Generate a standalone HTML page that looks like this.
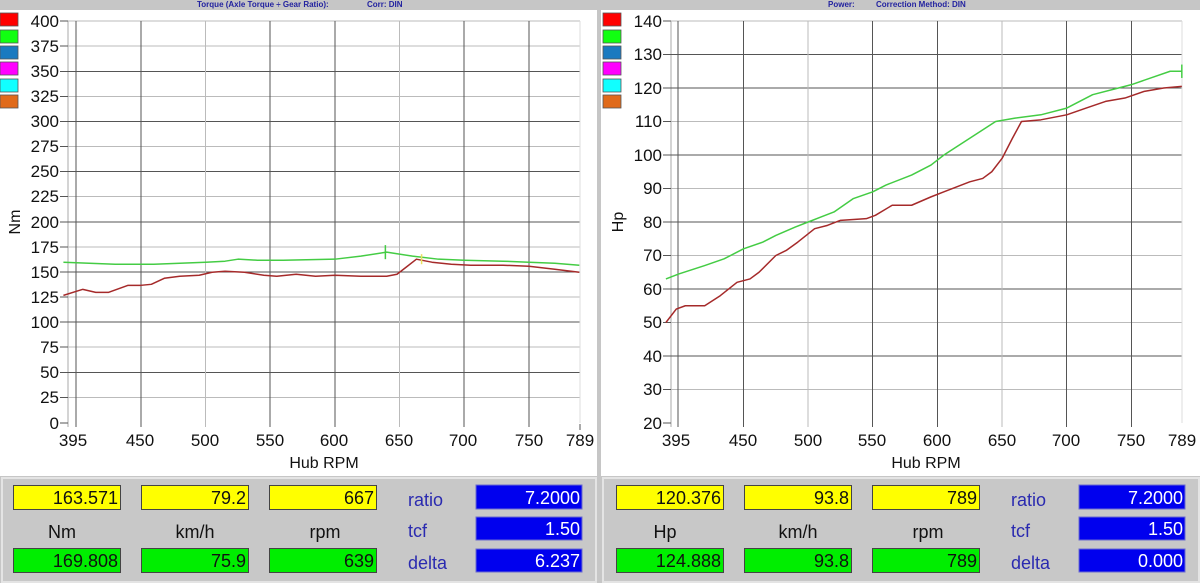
<!DOCTYPE html>
<html><head><meta charset="utf-8"><style>
html,body{margin:0;padding:0;background:#c8c8c8;}
svg{display:block;font-family:"Liberation Sans",sans-serif;}
</style></head><body>
<svg width="1200" height="583" viewBox="0 0 1200 583" xmlns="http://www.w3.org/2000/svg">
<rect width="1200" height="583" fill="#c6c6c6"/>
<rect x="0" y="10" width="597" height="466" fill="#fff"/>
<rect x="601" y="10" width="599" height="466" fill="#fff"/>
<rect x="2" y="478" width="594" height="104" fill="#c8c8c8" stroke="#e4e4e4" stroke-width="2"/>
<rect x="603" y="478" width="596" height="104" fill="#c8c8c8" stroke="#e4e4e4" stroke-width="2"/>
<text x="197" y="7" font-size="8" font-weight="bold" fill="#2323a0">Torque (Axle Torque ÷ Gear Ratio):</text>
<text x="367" y="7" font-size="8" font-weight="bold" fill="#2323a0">Corr: DIN</text>
<text x="828" y="7" font-size="8" font-weight="bold" fill="#2323a0">Power:</text>
<text x="876" y="7" font-size="8" font-weight="bold" fill="#2323a0">Correction Method: DIN</text>

<g stroke="#555" stroke-width="0.8">
<rect x="0" y="13" width="18" height="13" fill="#f00"/>
<rect x="0" y="30" width="18" height="13" fill="#1f1"/>
<rect x="0" y="46" width="18" height="13" fill="#1a7ac0"/>
<rect x="0" y="62" width="18" height="13" fill="#f0f"/>
<rect x="0" y="79" width="18" height="13" fill="#1ff"/>
<rect x="0" y="95" width="18" height="13" fill="#e06a1a"/>
<rect x="603" y="13" width="18" height="13" fill="#f00"/>
<rect x="603" y="30" width="18" height="13" fill="#1f1"/>
<rect x="603" y="46" width="18" height="13" fill="#1a7ac0"/>
<rect x="603" y="62" width="18" height="13" fill="#f0f"/>
<rect x="603" y="79" width="18" height="13" fill="#1ff"/>
<rect x="603" y="95" width="18" height="13" fill="#e06a1a"/>
</g>

<g stroke-width="1">
<line x1="68" y1="21" x2="68" y2="427" stroke="#aaa"/>
<line x1="68" y1="21" x2="580" y2="21" stroke="#bbb"/>
<line x1="68" y1="46" x2="580" y2="46" stroke="#bbb"/>
<line x1="68" y1="71.5" x2="580" y2="71.5" stroke="#555"/>
<line x1="68" y1="96.5" x2="580" y2="96.5" stroke="#bbb"/>
<line x1="68" y1="121.5" x2="580" y2="121.5" stroke="#555"/>
<line x1="68" y1="146.5" x2="580" y2="146.5" stroke="#bbb"/>
<line x1="68" y1="171.5" x2="580" y2="171.5" stroke="#555"/>
<line x1="68" y1="196.5" x2="580" y2="196.5" stroke="#bbb"/>
<line x1="68" y1="222" x2="580" y2="222" stroke="#555"/>
<line x1="68" y1="247" x2="580" y2="247" stroke="#bbb"/>
<line x1="68" y1="272" x2="580" y2="272" stroke="#555"/>
<line x1="68" y1="297" x2="580" y2="297" stroke="#bbb"/>
<line x1="68" y1="322" x2="580" y2="322" stroke="#555"/>
<line x1="68" y1="347" x2="580" y2="347" stroke="#bbb"/>
<line x1="68" y1="372.5" x2="580" y2="372.5" stroke="#555"/>
<line x1="68" y1="397.5" x2="580" y2="397.5" stroke="#bbb"/>
<line x1="76" y1="21" x2="76" y2="427" stroke="#555"/>
<line x1="141" y1="21" x2="141" y2="427" stroke="#555"/>
<line x1="205.5" y1="21" x2="205.5" y2="427" stroke="#bbb"/>
<line x1="270" y1="21" x2="270" y2="427" stroke="#555"/>
<line x1="335" y1="21" x2="335" y2="427" stroke="#555"/>
<line x1="399.5" y1="21" x2="399.5" y2="427" stroke="#bbb"/>
<line x1="464" y1="21" x2="464" y2="427" stroke="#555"/>
<line x1="529" y1="21" x2="529" y2="427" stroke="#555"/>
<line x1="580" y1="21" x2="580" y2="423" stroke="#ddd"/>
<line x1="580" y1="424" x2="580" y2="430" stroke="#555"/>
<g stroke="#555">
<line x1="60" y1="21" x2="68" y2="21"/><line x1="60" y1="46" x2="68" y2="46"/><line x1="60" y1="71.5" x2="68" y2="71.5"/><line x1="60" y1="96.5" x2="68" y2="96.5"/><line x1="60" y1="121.5" x2="68" y2="121.5"/><line x1="60" y1="146.5" x2="68" y2="146.5"/><line x1="60" y1="171.5" x2="68" y2="171.5"/><line x1="60" y1="196.5" x2="68" y2="196.5"/><line x1="60" y1="222" x2="68" y2="222"/><line x1="60" y1="247" x2="68" y2="247"/><line x1="60" y1="272" x2="68" y2="272"/><line x1="60" y1="297" x2="68" y2="297"/><line x1="60" y1="322" x2="68" y2="322"/><line x1="60" y1="347" x2="68" y2="347"/><line x1="60" y1="372.5" x2="68" y2="372.5"/><line x1="60" y1="397.5" x2="68" y2="397.5"/><line x1="60" y1="423" x2="68" y2="423"/>
</g>
</g>
<g font-size="17" fill="#111" text-anchor="end">
<text x="59" y="27">400</text><text x="59" y="52">375</text><text x="59" y="77">350</text><text x="59" y="102">325</text><text x="59" y="127">300</text><text x="59" y="152">275</text><text x="59" y="177">250</text><text x="59" y="202">225</text><text x="59" y="228">200</text><text x="59" y="253">175</text><text x="59" y="278">150</text><text x="59" y="303">125</text><text x="59" y="328">100</text><text x="59" y="353">75</text><text x="59" y="378">50</text><text x="59" y="403">25</text><text x="59" y="429">0</text>
</g>
<g font-size="17" fill="#111" text-anchor="middle">
<text x="73" y="446">395</text><text x="140" y="446">450</text><text x="205" y="446">500</text><text x="270" y="446">550</text><text x="334" y="446">600</text><text x="399" y="446">650</text><text x="463" y="446">700</text><text x="529" y="446">750</text><text x="580" y="446">789</text>
<text x="324" y="468" font-size="16">Hub RPM</text>
<text transform="translate(20,222) rotate(-90)" font-size="16">Nm</text>
</g>
<g transform="translate(141,423) scale(1.293,-1.005) translate(-450,0)" fill="none" stroke-width="1.5" stroke-linejoin="round">
<polyline vector-effect="non-scaling-stroke" stroke="#44cc44" points="390,160 410,159 430,158 460,158 480,159 500,160 515,161 525,163 540,162 560,162 600,163 620,166 640,170 660,166 680,163 700,162 730,161 750,160 770,159 789,157"/>
<polyline vector-effect="non-scaling-stroke" stroke="#a52a2a" points="390,127 400,131 405,133 415,130 425,130 440,137 450,137 458,138 468,144 480,146 495,147 505,150 515,151 530,150 545,147 555,146 570,148 585,146 600,147 620,146 640,146 648,148 655,155 663,163 675,160 690,158 705,157 730,157 750,156 770,153 789,150"/>
<line vector-effect="non-scaling-stroke" x1="639" y1="163" x2="639" y2="177" stroke="#44cc44"/>
<line vector-effect="non-scaling-stroke" x1="667" y1="158" x2="667" y2="168" stroke="#e8e060"/>
</g>

<g stroke-width="1">
<line x1="671" y1="21" x2="671" y2="427" stroke="#aaa"/>
<line x1="671" y1="21" x2="1182" y2="21" stroke="#bbb"/>
<line x1="671" y1="54.5" x2="1182" y2="54.5" stroke="#555"/>
<line x1="671" y1="88" x2="1182" y2="88" stroke="#555"/>
<line x1="671" y1="121.5" x2="1182" y2="121.5" stroke="#bbb"/>
<line x1="671" y1="155" x2="1182" y2="155" stroke="#555"/>
<line x1="671" y1="188.5" x2="1182" y2="188.5" stroke="#bbb"/>
<line x1="671" y1="222" x2="1182" y2="222" stroke="#555"/>
<line x1="671" y1="255.5" x2="1182" y2="255.5" stroke="#bbb"/>
<line x1="671" y1="289" x2="1182" y2="289" stroke="#555"/>
<line x1="671" y1="322.5" x2="1182" y2="322.5" stroke="#bbb"/>
<line x1="671" y1="356" x2="1182" y2="356" stroke="#555"/>
<line x1="671" y1="389.5" x2="1182" y2="389.5" stroke="#bbb"/>
<line x1="678" y1="21" x2="678" y2="427" stroke="#555"/>
<line x1="743.5" y1="21" x2="743.5" y2="427" stroke="#555"/>
<line x1="808" y1="21" x2="808" y2="427" stroke="#bbb"/>
<line x1="872.5" y1="21" x2="872.5" y2="427" stroke="#555"/>
<line x1="937.5" y1="21" x2="937.5" y2="427" stroke="#555"/>
<line x1="1002" y1="21" x2="1002" y2="427" stroke="#bbb"/>
<line x1="1066.5" y1="21" x2="1066.5" y2="427" stroke="#555"/>
<line x1="1131.5" y1="21" x2="1131.5" y2="427" stroke="#555"/>
<line x1="1182" y1="21" x2="1182" y2="423" stroke="#ddd"/>
<g stroke="#555">
<line x1="663" y1="21" x2="671" y2="21"/><line x1="663" y1="54.5" x2="671" y2="54.5"/><line x1="663" y1="88" x2="671" y2="88"/><line x1="663" y1="121.5" x2="671" y2="121.5"/><line x1="663" y1="155" x2="671" y2="155"/><line x1="663" y1="188.5" x2="671" y2="188.5"/><line x1="663" y1="222" x2="671" y2="222"/><line x1="663" y1="255.5" x2="671" y2="255.5"/><line x1="663" y1="289" x2="671" y2="289"/><line x1="663" y1="322.5" x2="671" y2="322.5"/><line x1="663" y1="356" x2="671" y2="356"/><line x1="663" y1="389.5" x2="671" y2="389.5"/><line x1="663" y1="423" x2="671" y2="423"/>
</g>
</g>
<g font-size="17" fill="#111" text-anchor="end">
<text x="662" y="27">140</text><text x="662" y="60">130</text><text x="662" y="94">120</text><text x="662" y="127">110</text><text x="662" y="161">100</text><text x="662" y="194">90</text><text x="662" y="228">80</text><text x="662" y="261">70</text><text x="662" y="295">60</text><text x="662" y="328">50</text><text x="662" y="362">40</text><text x="662" y="395">30</text><text x="662" y="429">20</text>
</g>
<g font-size="17" fill="#111" text-anchor="middle">
<text x="676" y="446">395</text><text x="743" y="446">450</text><text x="808" y="446">500</text><text x="872" y="446">550</text><text x="937" y="446">600</text><text x="1002" y="446">650</text><text x="1066" y="446">700</text><text x="1131" y="446">750</text><text x="1182" y="446">789</text>
<text x="926" y="468" font-size="16">Hub RPM</text>
<text transform="translate(623,222) rotate(-90)" font-size="16">Hp</text>
</g>
<g transform="translate(743.5,490) scale(1.293,-3.35) translate(-450,0)" fill="none" stroke-width="1.5" stroke-linejoin="round">
<polyline vector-effect="non-scaling-stroke" stroke="#44cc44" points="390,63 400,64.5 420,67 435,69 450,72 465,74 475,76 490,78.5 500,80 510,81.5 520,83 535,87 550,89 560,91 580,94 595,97 605,100 625,105 645,110 660,111 680,112 700,114 720,118 740,120 750,121 765,123 780,125 789,125"/>
<polyline vector-effect="non-scaling-stroke" stroke="#a52a2a" points="390,50 398,54 405,55 420,55 432,58 445,62 455,63 462,65 475,70 483,71.5 492,74 505,78 515,79 525,80.5 545,81 552,82 565,85 580,85 595,87.5 605,89 615,90.5 625,92 635,93 642,95 650,99 658,105 665,110 680,110.5 700,112 715,114 730,116 745,117 760,119 775,120 789,120.5"/>
<line vector-effect="non-scaling-stroke" x1="789" y1="123" x2="789" y2="127" stroke="#44cc44"/>
</g>

<rect x="597" y="0" width="4" height="583" fill="#c6c6c6"/>

<g stroke="#444" stroke-width="1">
<rect x="13.5" y="485.5" width="107" height="24" fill="#ffff00"/>
<rect x="141.5" y="485.5" width="107" height="24" fill="#ffff00"/>
<rect x="269.5" y="485.5" width="107" height="24" fill="#ffff00"/>
<rect x="13.5" y="548.5" width="107" height="24" fill="#00ee00"/>
<rect x="141.5" y="548.5" width="107" height="24" fill="#00ee00"/>
<rect x="269.5" y="548.5" width="107" height="24" fill="#00ee00"/>
<rect x="476" y="485" width="106" height="24" fill="#0000ee" stroke="#6a6ad0"/>
<rect x="476" y="517" width="106" height="23" fill="#0000ee" stroke="#6a6ad0"/>
<rect x="476" y="549" width="106" height="23" fill="#0000ee" stroke="#6a6ad0"/>
<rect x="616.5" y="485.5" width="107" height="24" fill="#ffff00"/>
<rect x="744.5" y="485.5" width="107" height="24" fill="#ffff00"/>
<rect x="872.5" y="485.5" width="107" height="24" fill="#ffff00"/>
<rect x="616.5" y="548.5" width="107" height="24" fill="#00ee00"/>
<rect x="744.5" y="548.5" width="107" height="24" fill="#00ee00"/>
<rect x="872.5" y="548.5" width="107" height="24" fill="#00ee00"/>
<rect x="1079" y="485" width="106" height="24" fill="#0000ee" stroke="#6a6ad0"/>
<rect x="1079" y="517" width="106" height="23" fill="#0000ee" stroke="#6a6ad0"/>
<rect x="1079" y="549" width="106" height="23" fill="#0000ee" stroke="#6a6ad0"/>
</g>
<g font-size="18" text-anchor="end" fill="#111">
<text x="118" y="504">163.571</text><text x="246" y="504">79.2</text><text x="374" y="504">667</text>
<text x="118" y="567">169.808</text><text x="246" y="567">75.9</text><text x="374" y="567">639</text>
<text x="721" y="504">120.376</text><text x="849" y="504">93.8</text><text x="977" y="504">789</text>
<text x="721" y="567">124.888</text><text x="849" y="567">93.8</text><text x="977" y="567">789</text>
<g fill="#fff">
<text x="580" y="504">7.2000</text><text x="580" y="535">1.50</text><text x="580" y="567">6.237</text>
<text x="1183" y="504">7.2000</text><text x="1183" y="535">1.50</text><text x="1183" y="567">0.000</text>
</g>
</g>
<g font-size="18" fill="#111" text-anchor="middle">
<text x="62" y="538">Nm</text><text x="195" y="538">km/h</text><text x="325" y="538">rpm</text>
<text x="665" y="538">Hp</text><text x="798" y="538">km/h</text><text x="928" y="538">rpm</text>
</g>
<g font-size="18" fill="#2a2ab0">
<text x="408" y="506">ratio</text><text x="408" y="537">tcf</text><text x="408" y="569">delta</text>
<text x="1011" y="506">ratio</text><text x="1011" y="537">tcf</text><text x="1011" y="569">delta</text>
</g>
</svg>
</body></html>
